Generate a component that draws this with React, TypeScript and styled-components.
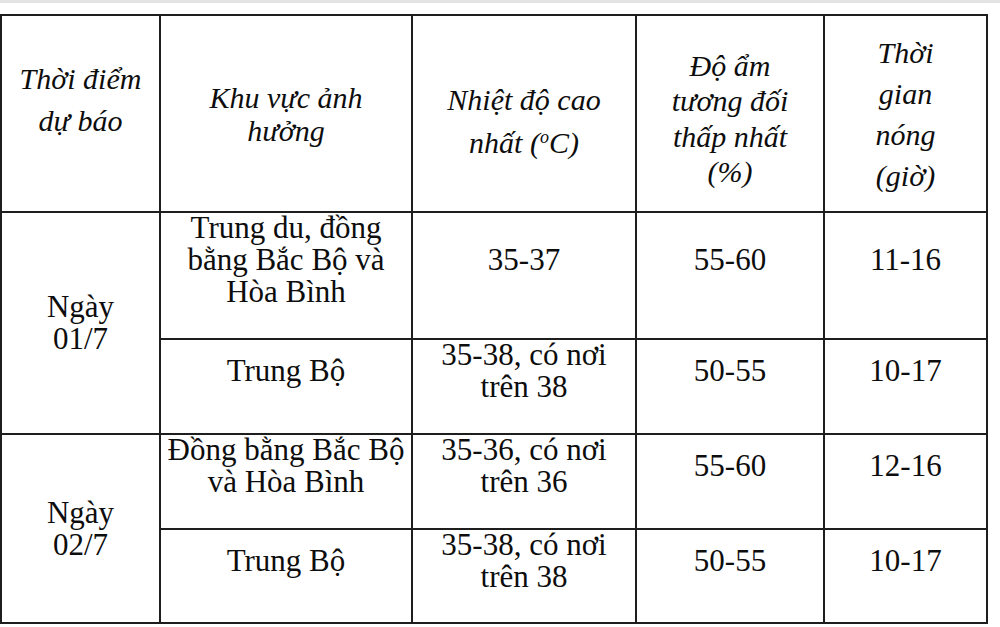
import React, { FC } from 'react'
import styled, { createGlobalStyle } from 'styled-components'

const serif = `"Liberation Serif", "Times New Roman", "DejaVu Serif", serif`

const GlobalStyle = createGlobalStyle`
    html, body {
        margin: 0;
        padding: 0;
        background: #ffffff;
    }

    body {
        font-family: ${serif};
        color: #0d0d0d;
    }
`

const Page = styled.div`
    width: 1000px;
    height: 627px;
    overflow: hidden;
    background: #ffffff;
    font-family: ${serif};
`

const TopStrip = styled.div`
    height: 3px;
    background: #e4e4e4;
    margin-bottom: 11px;
`

const Grid = styled.div`
    display: grid;
    grid-template-columns: 157px 250px 222px 186px 161px;
    grid-template-rows: 195px 125px 93px 93px 92px;
    gap: 2px;
    padding: 2px;
    width: 984px;
    background: #1e1e1e;
`

const HeadCell = styled.div<{ $lh: number; $shift?: number }>`
    background: #ffffff;
    display: flex;
    align-items: center;
    justify-content: center;
    text-align: center;

    font-family: ${serif};
    font-size: 30px;
    font-style: italic;
    line-height: ${p => p.$lh}px;

    padding-top: ${p => (p.$shift && p.$shift > 0 ? p.$shift : 0)}px;
    padding-bottom: ${p => (p.$shift && p.$shift < 0 ? -p.$shift : 0)}px;
`

const Cell = styled.div<{ $span?: boolean }>`
    background: #ffffff;
    display: flex;
    align-items: center;
    justify-content: center;
    text-align: center;

    font-family: ${serif};
    font-size: 31px;
    line-height: 32px;

    grid-row: ${p => (p.$span ? 'span 2' : 'auto')};
    padding-bottom: ${p => (p.$span ? 0 : 31)}px;
`

const Text = styled.span`
    display: block;
`

const Sup = styled.sup`
    font-size: 18px;
    line-height: 0;
    vertical-align: 10px;
`

interface IRow {
    area: React.ReactNode
    temp: React.ReactNode
    humidity: string
    hours: string
}

const days: { day: string; rows: IRow[] }[] = [
    {
        day: '01/7',
        rows: [
            {
                area: <>Trung du, đồng<br />bằng Bắc Bộ và<br />Hòa Bình</>,
                temp: '35-37',
                humidity: '55-60',
                hours: '11-16',
            },
            {
                area: 'Trung Bộ',
                temp: <>35-38, có nơi<br />trên 38</>,
                humidity: '50-55',
                hours: '10-17',
            },
        ],
    },
    {
        day: '02/7',
        rows: [
            {
                area: <>Đồng bằng Bắc Bộ<br />và Hòa Bình</>,
                temp: <>35-36, có nơi<br />trên 36</>,
                humidity: '55-60',
                hours: '12-16',
            },
            {
                area: 'Trung Bộ',
                temp: <>35-38, có nơi<br />trên 38</>,
                humidity: '50-55',
                hours: '10-17',
            },
        ],
    },
]

const App: FC = () => {
    return (
        <Page>
            <GlobalStyle />
            <TopStrip />
            <Grid>
                <HeadCell $lh={42} $shift={-28}><Text>Thời điểm<br />dự báo</Text></HeadCell>
                <HeadCell $lh={33}><Text>Khu vực ảnh<br />hưởng</Text></HeadCell>
                <HeadCell $lh={43} $shift={14}><Text>Nhiệt độ cao<br />nhất (<Sup>o</Sup>C)</Text></HeadCell>
                <HeadCell $lh={35.5} $shift={10}><Text>Độ ẩm<br />tương đối<br />thấp nhất<br />(%)</Text></HeadCell>
                <HeadCell $lh={41}><Text>Thời<br />gian<br />nóng<br />(giờ)</Text></HeadCell>

                {days.map(d =>
                    d.rows.map((r, i) => (
                        <React.Fragment key={d.day + i}>
                            {i === 0 && <Cell $span><Text>Ngày<br />{d.day}</Text></Cell>}
                            <Cell><Text>{r.area}</Text></Cell>
                            <Cell><Text>{r.temp}</Text></Cell>
                            <Cell><Text>{r.humidity}</Text></Cell>
                            <Cell><Text>{r.hours}</Text></Cell>
                        </React.Fragment>
                    ))
                )}
            </Grid>
        </Page>
    )
}

export default App
